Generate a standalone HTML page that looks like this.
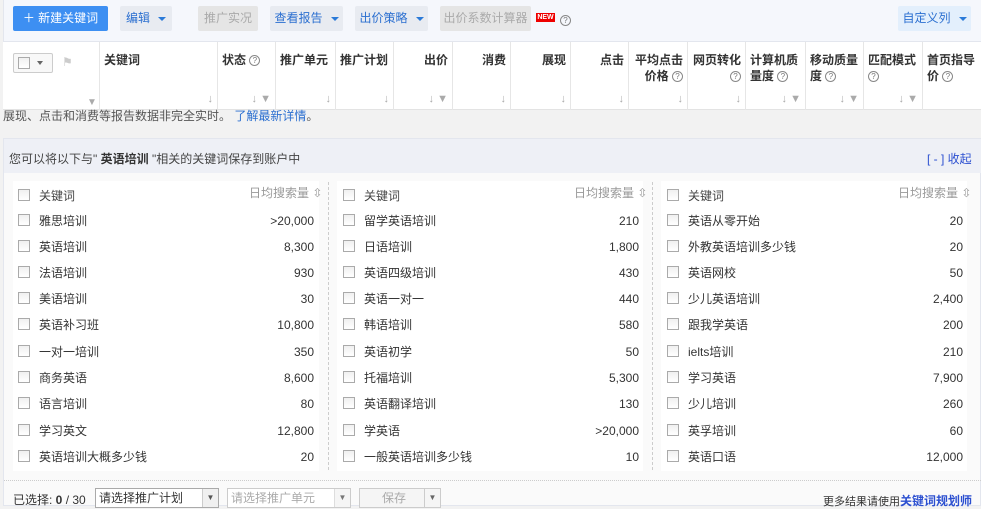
<!DOCTYPE html>
<html><head><meta charset="utf-8"><style>
*{margin:0;padding:0;box-sizing:border-box}
body{width:981px;height:506px;overflow:hidden;background:#f2f2f2;font-family:"Liberation Sans","Noto Sans CJK SC",sans-serif;font-size:12px;color:#333;position:relative}
.a{position:absolute}
.btn{position:absolute;top:6px;height:25px;line-height:25px;border-radius:2px;font-size:12px;text-align:center}
.dd{display:inline-block;width:0;height:0;border-left:4px solid transparent;border-right:4px solid transparent;border-top:4px solid #2b7ad8;margin-left:8px;vertical-align:middle}
.q{display:inline-block;width:11px;height:11px;border:1px solid #888;border-radius:50%;font-size:8px;line-height:9px;text-align:center;color:#777;font-weight:normal;vertical-align:1px}
.th{position:absolute;top:42px;height:68px;border-left:1px solid #e6e6e6;font-weight:bold;font-size:12px;padding:10px 4px 0 4px;line-height:16px;color:#333}
.ar{position:absolute;bottom:3px;color:#aaa;font-size:11px}
.cb{position:absolute;width:12px;height:12px;border:1px solid #aaa;background:linear-gradient(#f0f0f0,#fff)}
.r{position:absolute;font-size:12px;color:#333;height:14px;line-height:14px}
.n{position:absolute;font-size:12px;text-align:right;width:100px;line-height:14px}
</style></head><body>
<div class="a" style="left:3px;top:0;width:978px;height:42px;background:#f5f7fc;border-left:1px solid #e3e6ee;border-bottom:1px solid #e3e6ee"></div>
<div class="btn" style="left:13px;width:95px;background:#3d8ff2;color:#fff">＋ 新建关键词</div>
<div class="btn" style="left:120px;width:52px;background:#e8ebf1;color:#2b6fd0">编辑<span class="dd"></span></div>
<div class="btn" style="left:198px;width:60px;background:#e5e5e5;color:#aaa">推广实况</div>
<div class="btn" style="left:270px;width:73px;background:#e8ebf1;color:#2b6fd0">查看报告<span class="dd"></span></div>
<div class="btn" style="left:355px;width:73px;background:#e8ebf1;color:#2b6fd0">出价策略<span class="dd"></span></div>
<div class="btn" style="left:440px;width:91px;background:#e5e5e5;color:#aaa">出价系数计算器</div>
<div class="a" style="left:536px;top:13px;width:19px;height:9px;background:#e00;color:#fff;font-size:7px;line-height:9px;text-align:center;font-weight:bold">NEW</div>
<div class="a" style="left:560px;top:13px"><span class="q">?</span></div>
<div class="btn" style="left:898px;width:73px;background:#e3effc;color:#2b6fd0">自定义列<span class="dd"></span></div>

<div class="a" style="left:3px;top:42px;width:978px;height:68px;background:#fff;border-bottom:1px solid #e3e3e3"></div>
<div class="a" style="left:13px;top:53px;width:40px;height:20px;border:1px solid #ccc;border-radius:2px;background:#f8f8f8"></div>
<div class="cb" style="left:18px;top:57px"></div>
<div class="a" style="left:37px;top:61px;border-left:3px solid transparent;border-right:3px solid transparent;border-top:4px solid #666"></div>
<div class="a" style="left:62px;top:55px;width:12px;height:12px;color:#ccc;font-size:12px">⚑</div>
<div class="a" style="left:87px;top:97px;color:#aaa;font-size:10px">▼</div>
<div class="th" style="left:99px;width:118px">关键词<span class="ar" style="right:4px">↓</span></div>
<div class="th" style="left:217px;width:58px">状态 <span class="q">?</span><span class="ar" style="right:4px">↓ ▼</span></div>
<div class="th" style="left:275px;width:60px">推广单元<span class="ar" style="right:4px">↓</span></div>
<div class="th" style="left:335px;width:58px">推广计划<span class="ar" style="right:4px">↓</span></div>
<div class="th" style="left:393px;width:59px;text-align:right">出价<span class="ar" style="right:4px">↓ ▼</span></div>
<div class="th" style="left:452px;width:58px;text-align:right">消费<span class="ar" style="right:4px">↓</span></div>
<div class="th" style="left:510px;width:60px;text-align:right">展现<span class="ar" style="right:4px">↓</span></div>
<div class="th" style="left:570px;width:58px;text-align:right">点击<span class="ar" style="right:4px">↓</span></div>
<div class="th" style="left:628px;width:59px;text-align:right">平均点击<br>价格 <span class="q">?</span><span class="ar" style="right:4px">↓</span></div>
<div class="th" style="left:687px;width:58px;text-align:right">网页转化<br><span class="q">?</span><span class="ar" style="right:4px">↓</span></div>
<div class="th" style="left:745px;width:60px">计算机质<br>量度 <span class="q">?</span><span class="ar" style="right:4px">↓ ▼</span></div>
<div class="th" style="left:805px;width:58px">移动质量<br>度 <span class="q">?</span><span class="ar" style="right:4px">↓ ▼</span></div>
<div class="th" style="left:863px;width:59px">匹配模式<br><span class="q">?</span><span class="ar" style="right:4px">↓ ▼</span></div>
<div class="th" style="left:922px;width:59px">首页指导<br>价 <span class="q">?</span></div>
<div class="a" style="left:3px;top:109px;font-size:12px;color:#555;line-height:14px">展现、点击和消费等报告数据非完全实时。 <span style="color:#2b6fd0">了解最新详情</span>。</div>

<div class="a" style="left:3px;top:138px;width:978px;height:368px;background:#fafafa;border:1px solid #e3e6ee"></div>
<div class="a" style="left:4px;top:139px;width:977px;height:34px;background:#eef0f6"></div>
<div class="a" style="left:9px;top:150px;font-size:12px;color:#444">您可以将以下与" <b style="color:#333">英语培训</b> "相关的关键词保存到账户中</div>
<div class="a" style="left:927px;top:150px;font-size:12px;color:#2b4fd0">[ - ] 收起</div>
<div class="a" style="left:13px;top:181px;width:306px;height:290px;background:#fff"></div>
<div class="a" style="left:337px;top:181px;width:306px;height:290px;background:#fff"></div>
<div class="a" style="left:661px;top:181px;width:306px;height:290px;background:#fff"></div>
<div class="a" style="left:328px;top:182px;height:288px;border-left:1px dashed #ccc"></div>
<div class="a" style="left:652px;top:182px;height:288px;border-left:1px dashed #ccc"></div>
<div class="a" style="left:4px;top:480px;width:977px;border-top:1px dotted #ccc"></div>

<div id="rows"></div>
<script>
var cols=[[18,"雅思培训|>20,000","英语培训|8,300","法语培训|930","美语培训|30","英语补习班|10,800","一对一培训|350","商务英语|8,600","语言培训|80","学习英文|12,800","英语培训大概多少钱|20"],
[343,"留学英语培训|210","日语培训|1,800","英语四级培训|430","英语一对一|440","韩语培训|580","英语初学|50","托福培训|5,300","英语翻译培训|130","学英语|>20,000","一般英语培训多少钱|10"],
[667,"英语从零开始|20","外教英语培训多少钱|20","英语网校|50","少儿英语培训|2,400","跟我学英语|200","ielts培训|210","学习英语|7,900","少儿培训|260","英孚培训|60","英语口语|12,000"]];
var ys=[221,247,273,299,325,352,378,404,431,457],h="";
cols.forEach(function(c){var x=c[0];
h+='<div class="cb" style="left:'+x+'px;top:189px"></div><div class="r" style="left:'+(x+21)+'px;top:189px;color:#444">关键词</div><div class="r" style="left:'+(x+231)+'px;top:186px;color:#999">日均搜索量 ⇳</div>';
for(var i=0;i<10;i++){var p=c[i+1].split("|"),y=ys[i]-7;
h+='<div class="cb" style="left:'+x+'px;top:'+(y)+'px"></div><div class="r" style="left:'+(x+21)+'px;top:'+y+'px">'+p[0]+'</div><div class="n" style="left:'+(x+196)+'px;top:'+y+'px">'+p[1]+'</div>';}
});
document.getElementById("rows").innerHTML=h;
</script>

<div class="a" style="left:13px;top:491px;font-size:12px;color:#333">已选择: <b>0</b> / 30</div>
<div class="a" style="left:95px;top:488px;width:124px;height:20px;border:1px solid #aaa;background:#fff;font-size:12px;line-height:18px;padding-left:3px">请选择推广计划</div>
<div class="a" style="left:202px;top:489px;width:16px;height:18px;border-left:1px solid #ccc;background:#f0f0f0;font-size:8px;text-align:center;line-height:18px;color:#555">▼</div>
<div class="a" style="left:227px;top:488px;width:124px;height:20px;border:1px solid #ccc;background:#fff;font-size:12px;line-height:18px;padding-left:3px;color:#aaa">请选择推广单元</div>
<div class="a" style="left:334px;top:489px;width:16px;height:18px;border-left:1px solid #ddd;background:#f5f5f5;font-size:8px;text-align:center;line-height:18px;color:#777">▼</div>
<div class="a" style="left:359px;top:488px;width:82px;height:20px;border:1px solid #ccc;background:#f5f5f5;font-size:12px;line-height:18px;color:#aaa;padding-left:22px">保存</div>
<div class="a" style="left:424px;top:489px;width:16px;height:18px;border-left:1px solid #ccc;font-size:8px;text-align:center;line-height:18px;color:#666">▼</div>
<div class="a" style="left:823px;top:492px;font-size:11px;color:#333">更多结果请使用<b style="color:#2b4fd0;font-size:12px">关键词规划师</b></div>
</body></html>
